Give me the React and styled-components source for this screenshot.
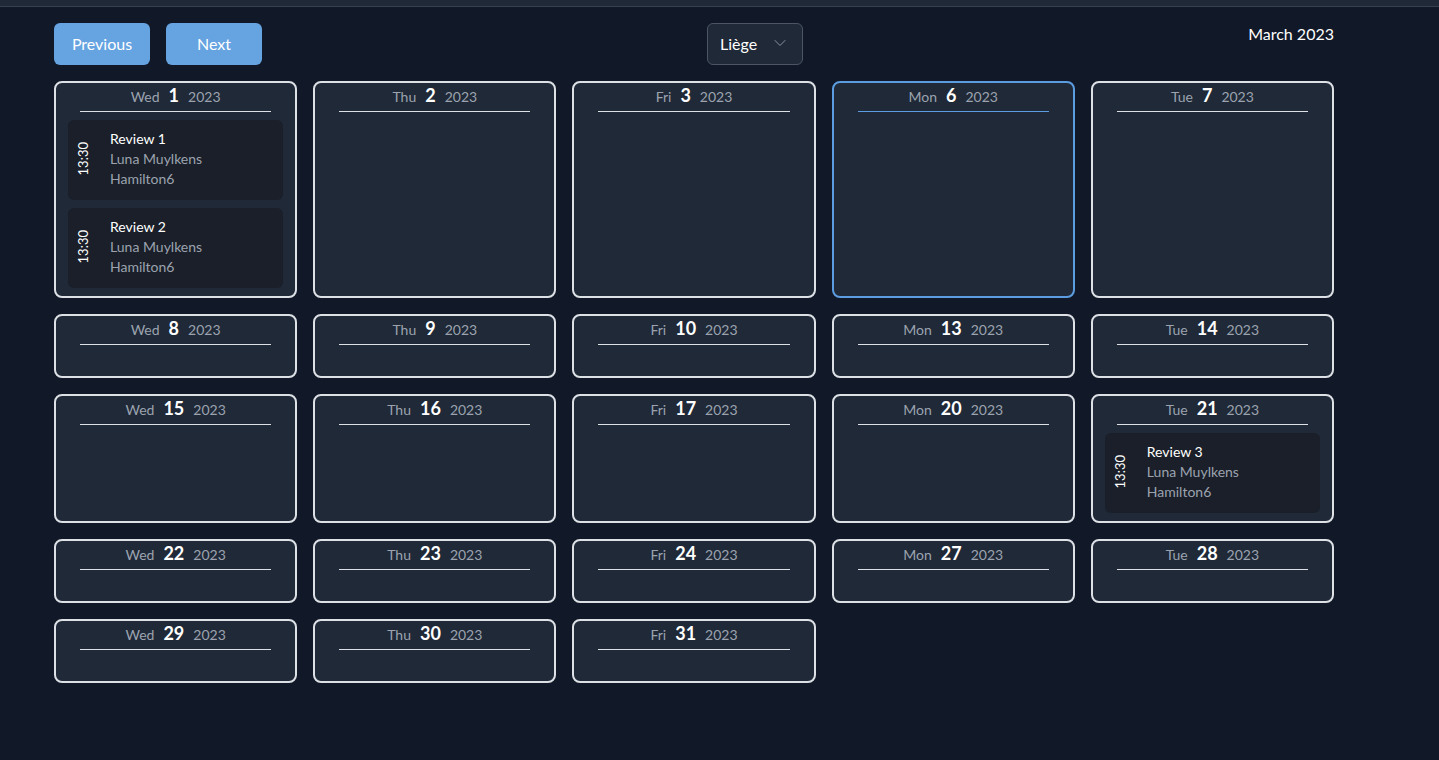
import { createGlobalStyle, styled } from 'styled-components';
import { ChevronDown } from 'lucide-react';

const days = [
  { name: 'Wed', day: 1, events: [1, 2] },
  { name: 'Thu', day: 2 },
  { name: 'Fri', day: 3 },
  { name: 'Mon', day: 6, active: true },
  { name: 'Tue', day: 7 },
  { name: 'Wed', day: 8 },
  { name: 'Thu', day: 9 },
  { name: 'Fri', day: 10 },
  { name: 'Mon', day: 13 },
  { name: 'Tue', day: 14 },
  { name: 'Wed', day: 15 },
  { name: 'Thu', day: 16 },
  { name: 'Fri', day: 17 },
  { name: 'Mon', day: 20 },
  { name: 'Tue', day: 21, events: [3] },
  { name: 'Wed', day: 22 },
  { name: 'Thu', day: 23 },
  { name: 'Fri', day: 24 },
  { name: 'Mon', day: 27 },
  { name: 'Tue', day: 28 },
  { name: 'Wed', day: 29 },
  { name: 'Thu', day: 30 },
  { name: 'Fri', day: 31 },
];

const App = () => (
  <>
    <GlobalStyle />
    <TopBar />
    <Main>
      <Toolbar>
        <ButtonGroup>
          <NavButton type="button">Previous</NavButton>
          <NavButton type="button">Next</NavButton>
        </ButtonGroup>
        <Select>
          <span>Liège</span>
          <ChevronDown size={20} strokeWidth={1.2} color="#8b93a0" />
        </Select>
        <MonthTitle>March 2023</MonthTitle>
      </Toolbar>
      <Grid>
        {days.map((d) => (
          <DayCard key={d.day} $active={d.active}>
            <DayHeader $active={d.active}>
              <span className="muted">{d.name}</span>
              <span className="num">{d.day}</span>
              <span className="muted">2023</span>
            </DayHeader>
            <DayBody>
              {(d.events || []).map((n) => (
                <Event key={n}>
                  <Time>13:30</Time>
                  <EventInfo>
                    <strong>Review {n}</strong>
                    <span>Luna Muylkens</span>
                    <span>Hamilton6</span>
                  </EventInfo>
                </Event>
              ))}
            </DayBody>
          </DayCard>
        ))}
      </Grid>
    </Main>
  </>
);

export default App;

const GlobalStyle = createGlobalStyle`
* { box-sizing: border-box; }
html, body {
  margin: 0;
  background: #111827;
  color: #fff;
  font-family: Lato, "Noto Sans", sans-serif;
}
`;

const TopBar = styled.div`
height: 7px;
background: #1f2937;
border-bottom: 1px solid #374151;
`;

const Main = styled.main`
width: 1334px;
padding: 16px 0 40px 54px;
`;

const Toolbar = styled.div`
display: flex;
justify-content: space-between;
align-items: flex-start;
margin-bottom: 16px;
`;

const ButtonGroup = styled.div`
display: flex;
gap: 16px;
`;

const NavButton = styled.button`
width: 96px;
height: 42px;
padding: 0 0 2px;
border: none;
border-radius: 6px;
background: #66a3e1;
color: #fff;
font-family: inherit;
font-size: 16px;
`;

const Select = styled.div`
width: 96px;
height: 42px;
display: flex;
align-items: center;
justify-content: space-between;
padding: 0 12px 2px 12px;
border: 1px solid #4b5563;
border-radius: 6px;
background: #1f2937;
font-size: 16px;
`;

const MonthTitle = styled.div`
font-size: 16px;
font-weight: 400;
line-height: 22px;
`;

const Grid = styled.div`
display: grid;
grid-template-columns: repeat(5, 1fr);
gap: 16px;
align-items: stretch;
`;

const DayCard = styled.div`
background: #1f2937;
border: 2px solid ${(p) => (p.$active ? '#5c9ce0' : '#dde1e6')};
border-radius: 8px;
`;

const DayHeader = styled.div`
width: 80%;
margin: 0 auto;
height: 29px;
display: flex;
justify-content: center;
align-items: baseline;
gap: 9px;
padding-top: 1px;
border-bottom: 1px solid ${(p) => (p.$active ? '#5c9ce0' : '#dde1e6')};
font-size: 14px;

.muted {
  color: #9ca3af;
}

.num {
  font-size: 18px;
  font-weight: 700;
  color: #fff;
}
`;

const DayBody = styled.div`
display: flex;
flex-direction: column;
gap: 8px;
min-height: 31px;
padding: 8px 12px;
`;

const Event = styled.div`
height: 80px;
display: flex;
align-items: center;
gap: 19px;
padding: 0 7px 2px;
background: #1a1f29;
border-radius: 6px;
`;

const Time = styled.div`
writing-mode: vertical-rl;
transform: rotate(180deg);
font-size: 13px;
width: 16px;
`;

const EventInfo = styled.div`
display: flex;
flex-direction: column;
font-size: 14px;
line-height: 20px;
color: #9ca3af;

strong {
  color: #fff;
  font-weight: 400;
}
`;
